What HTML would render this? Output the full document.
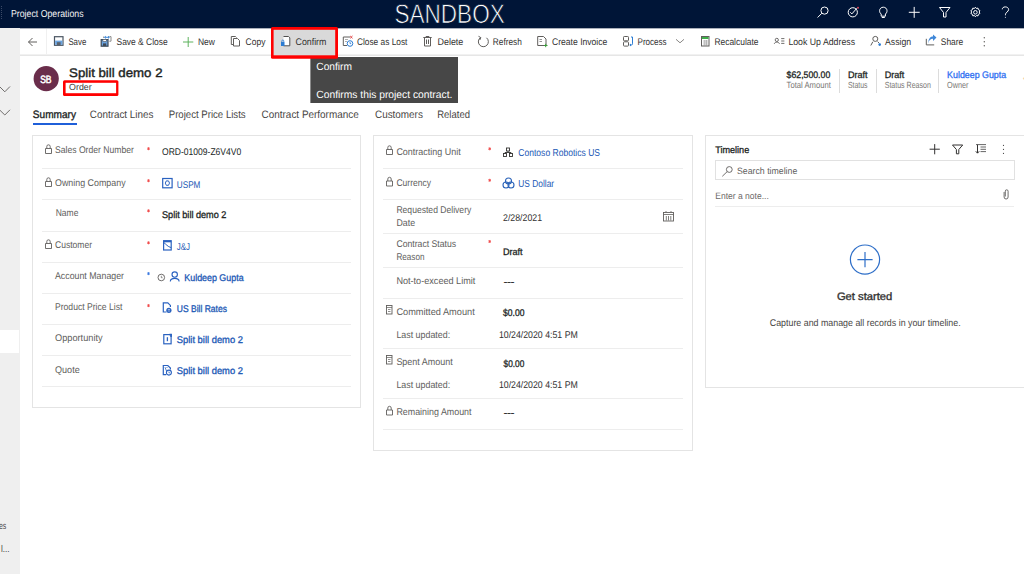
<!DOCTYPE html>
<html><head><meta charset="utf-8"><style>
html,body{margin:0;padding:0;width:1024px;height:574px;overflow:hidden;background:#fff}
svg{display:block;font-family:"Liberation Sans",sans-serif;text-rendering:geometricPrecision}
</style></head><body>
<svg width="1024" height="574" viewBox="0 0 1024 574">
<g shape-rendering="crispEdges">
<rect x="0" y="0" width="1024" height="28" fill="#001537"/>
<rect x="0" y="28" width="1024" height="1" fill="#aab0bb"/>
<rect x="0" y="28" width="20" height="546" fill="#efefef"/>
<rect x="0" y="330" width="19" height="23" fill="#ffffff"/>
<rect x="20" y="54" width="1004" height="1" fill="#f1f1f1"/>
<rect x="20" y="55" width="1004" height="1" fill="#e6e6e6"/>
<rect x="46" y="29" width="1" height="25" fill="#f0f0f0"/>
<!-- tooltip -->
<rect x="310" y="57" width="148" height="46" fill="#474747"/>
<rect x="310" y="57" width="1" height="46" fill="#8c8c8c"/>
<!-- confirm highlight -->
<rect x="271" y="27" width="67" height="31.8" rx="1.5" fill="#ff0000" shape-rendering="geometricPrecision"/>
<rect x="273.6" y="29.8" width="61.6" height="25.5" fill="#d9d9d9" shape-rendering="geometricPrecision"/>
<!-- order box -->
<rect x="63" y="80.3" width="55.4" height="15.6" rx="1.5" fill="#ff0000" shape-rendering="geometricPrecision"/>
<rect x="65.6" y="82.8" width="50.5" height="10.4" fill="#ffffff" shape-rendering="geometricPrecision"/>
<!-- tab underline -->
<rect x="33" y="123" width="44" height="2" fill="#1f5fd9"/>
<!-- header separators -->
<rect x="839" y="69" width="1" height="24" fill="#dcdcdc"/>
<rect x="876" y="69" width="1" height="24" fill="#dcdcdc"/>
<rect x="938" y="69" width="1" height="24" fill="#dcdcdc"/>
<!-- cards -->
<rect x="32.5" y="135.5" width="328" height="272" fill="#ffffff" stroke="#e4e4e4" stroke-width="1"/>
<rect x="373.5" y="135.5" width="319" height="315" fill="#ffffff" stroke="#e4e4e4" stroke-width="1"/>
<rect x="705.5" y="135.5" width="330" height="252" fill="#ffffff" stroke="#e4e4e4" stroke-width="1"/>
</g>
<g fill="#ededed" shape-rendering="crispEdges">
<rect x="42" y="168" width="309" height="1"/>
<rect x="42" y="199" width="309" height="1"/>
<rect x="42" y="231" width="309" height="1"/>
<rect x="42" y="262" width="309" height="1"/>
<rect x="42" y="293" width="309" height="1"/>
<rect x="42" y="324" width="309" height="1"/>
<rect x="42" y="355" width="309" height="1"/>
<rect x="42" y="386" width="309" height="1"/>
<rect x="383" y="168" width="300" height="1"/>
<rect x="383" y="199" width="300" height="1"/>
<rect x="383" y="233" width="300" height="1"/>
<rect x="383" y="267" width="300" height="1"/>
<rect x="383" y="298" width="300" height="1"/>
<rect x="383" y="348" width="300" height="1"/>
<rect x="383" y="398" width="300" height="1"/>
<rect x="383" y="429" width="300" height="1"/>
<rect x="715" y="206" width="299" height="1"/>
</g>
<rect x="715.5" y="160.5" width="299" height="19" fill="none" stroke="#e1e1e1" stroke-width="1" shape-rendering="crispEdges"/>

<g fill="none" stroke="#ffffff" stroke-width="1">
<!-- search -->
<circle cx="824.5" cy="10.6" r="3.6"/>
<path d="M821.9 13.2 L817.6 17.5"/>
<!-- target -->
<circle cx="852.8" cy="12.3" r="4.6"/>
<path d="M850.3 12.3 L851.9 13.9 L856.8 8.3"/>
<!-- bulb -->
<path d="M881.2 16.2 L881.2 14 C879.6 12.8 879.6 11.5 879.6 10.7 C879.6 8.6 881.3 7.2 883.3 7.2 C885.3 7.2 887 8.6 887 10.7 C887 11.5 887 12.8 885.4 14 L885.4 16.2 Z M881.8 17.5 L884.8 17.5"/>
<!-- plus -->
<path d="M908.8 12.3 H919.7 M914.2 6.9 V17.8"/>
<!-- filter -->
<path d="M939.5 7.5 H950 L946 12.5 V17 H943.5 V12.5 Z"/>
<!-- gear -->
<circle cx="975.4" cy="12.3" r="1.8"/>
<path d="M975.4 7.2 l1 1.3 l1.6 -0.4 l0.4 1.6 l1.5 0.8 l-0.7 1.5 l0.7 1.5 l-1.5 0.8 l-0.4 1.6 l-1.6 -0.4 l-1 1.3 l-1 -1.3 l-1.6 0.4 l-0.4 -1.6 l-1.5 -0.8 l0.7 -1.5 l-0.7 -1.5 l1.5 -0.8 l0.4 -1.6 l1.6 0.4 Z"/>
<!-- help -->
<path d="M1002.3 9.3 C1002.3 7.8 1003.5 6.9 1005.3 6.9 C1007.2 6.9 1008.6 8 1008.6 9.6 C1008.6 11.8 1005.4 12.3 1005.4 14.8 V15.3"/>
<circle cx="1005.4" cy="17.3" r="0.5" fill="#fff" stroke="none"/>
</g>
<circle cx="858" cy="7.8" r="1" fill="#e0455a"/>
<!-- waffle remnant -->
<path d="M1.5 6 V19" stroke="#3b4a66" stroke-width="1" stroke-dasharray="1 1"/>

<!-- command bar icons -->
<g fill="none" stroke="#605e5c" stroke-width="1">
<path d="M28.5 42 H37 M32.5 38 L28.5 42 L32.5 46"/>
</g>
<!-- save -->
<rect x="54.5" y="36.7" width="8.5" height="8.6" fill="#ffffff" stroke="#4a5562" stroke-width="1.2"/>
<rect x="55.1" y="40.6" width="7.3" height="4.2" fill="#6aa3df"/>
<rect x="56.9" y="42.2" width="3.7" height="3" fill="#5a626c"/>
<!-- save & close -->
<rect x="101.2" y="39.6" width="6.8" height="6.6" fill="#6aa3df" stroke="#3f4a57" stroke-width="1.2"/>
<rect x="102.9" y="39.4" width="3.4" height="2.2" fill="#fff" stroke="#3f4a57" stroke-width="0.6"/>
<rect x="103" y="43.4" width="3.2" height="2.6" fill="#3f4a57"/>
<path d="M103.5 36.6 V37.8 M109.5 36.6 H111 V41.2 H109.3" fill="none" stroke="#8a8a8a" stroke-width="1"/>
<path d="M104.6 37.3 H109.2 M108 36.2 L109.3 37.3 L108 38.4 M105.8 36.2 L104.5 37.3 L105.8 38.4" fill="none" stroke="#2b7cd3" stroke-width="0.9"/>
<!-- new -->
<path d="M183 42 H193.3 M188.2 37 V47" stroke="#5fb35f" stroke-width="1"/>
<!-- copy -->
<path d="M231.3 36.5 H235.5 L236.5 37.5 M231.3 36.5 V44.5 H233" fill="none" stroke="#605e5c" stroke-width="1"/>
<path d="M233.5 38.5 H237.5 L239.5 40.5 V46 H233.5 Z" fill="#fff" stroke="#605e5c" stroke-width="1"/>
<!-- confirm -->
<path d="M283.5 36.5 H288.5 L289.8 37.8 V45.8 H283.5 V43" fill="#fff" stroke="#4f4f4f" stroke-width="1"/>
<rect x="281" y="42" width="3.5" height="4" fill="#2b7cd3"/>
<path d="M281.8 42 V41 A1 1 0 0 1 283.8 41 V42" fill="none" stroke="#2b7cd3" stroke-width="0.8"/>
<!-- close as lost -->
<path d="M343.3 37 H350 M343.3 37 V45.5 H347" fill="none" stroke="#605e5c" stroke-width="1"/>
<path d="M345 39.5 H348 M345 41.5 H347" stroke="#999" stroke-width="0.8"/>
<path d="M350.2 36 L352.5 38.3 M352.5 36 L350.2 38.3" stroke="#e04040" stroke-width="1"/>
<circle cx="350" cy="43.5" r="2.8" fill="#fff" stroke="#2b7cd3" stroke-width="1"/>
<path d="M350 42 V43.6 H351.2" fill="none" stroke="#2b7cd3" stroke-width="0.8"/>
<!-- delete -->
<path d="M423.3 37.5 H431.7 M426 37.5 V36.5 H429 V37.5 M424.5 37.5 V46 H430.5 V37.5 M426.5 39.5 V44 M428.5 39.5 V44" fill="none" stroke="#605e5c" stroke-width="1"/>
<!-- refresh -->
<path d="M480.5 37.6 A5 5 0 1 0 486.5 37.8" fill="none" stroke="#605e5c" stroke-width="1"/>
<path d="M478.5 36.3 L480.8 37.6 L479.8 40" fill="none" stroke="#605e5c" stroke-width="1"/>
<!-- create invoice -->
<path d="M537.7 36.5 H543.5 L546 39 V45.5 H537.7 Z" fill="#fff" stroke="#605e5c" stroke-width="1"/>
<path d="M539.5 39.5 H542 M539.5 41.5 H542" stroke="#777" stroke-width="0.8"/>
<path d="M544 45.5 H547.5 M545.7 43.8 V47.2" stroke="#3a9a3a" stroke-width="1"/>
<!-- process -->
<rect x="623.5" y="36.5" width="5" height="4.3" rx="0.8" fill="none" stroke="#605e5c" stroke-width="1"/>
<rect x="623.5" y="41.8" width="5" height="4.3" rx="0.8" fill="none" stroke="#605e5c" stroke-width="1"/>
<path d="M632.5 37 V43.8 Q632.5 45 631.3 45 H630 M631 44 L629.8 45 L631 46" fill="none" stroke="#2b7cd3" stroke-width="1"/>
<path d="M631 37 H632.5" stroke="#2b7cd3" stroke-width="1"/>
<path d="M676 39.3 L680 42.8 L684 39.3" fill="none" stroke="#8a8886" stroke-width="1"/>
<!-- recalculate -->
<rect x="701.5" y="36.5" width="7.5" height="9.5" fill="#fff" stroke="#605e5c" stroke-width="1"/>
<rect x="702" y="37" width="6.5" height="2" fill="#3fae49"/>
<path d="M703 41 H708 M703 43 H708 M703 45 H708 M704.8 40 V46 M706.5 40 V46" stroke="#999" stroke-width="0.6"/>
<!-- look up address -->
<circle cx="776.8" cy="39.9" r="1.6" fill="none" stroke="#605e5c" stroke-width="0.9"/>
<path d="M774.3 43.8 C774.5 41.6 779.2 41.6 779.4 43.8" fill="none" stroke="#605e5c" stroke-width="0.9"/>
<path d="M781.2 38.6 H784.4 M781.2 41 H784.4 M781.2 43.4 H784.4" stroke="#605e5c" stroke-width="0.9"/>
<!-- assign -->
<circle cx="875.3" cy="38.9" r="2.5" fill="none" stroke="#605e5c" stroke-width="1"/>
<path d="M870.8 45.5 L872.8 41.8 M877.6 41.6 L879.3 43.3" fill="none" stroke="#605e5c" stroke-width="1"/>
<circle cx="879.7" cy="44.6" r="1.3" fill="#2b7cd3"/>
<!-- share -->
<path d="M926.3 38.8 V44.9 H934.2" fill="none" stroke="#605e5c" stroke-width="1"/>
<path d="M928.3 43.6 C928.6 40.2 930.6 38.8 933 38.8 V40.9 L936.5 37.6 L933 34.6 V36.6 C930 36.6 928.2 39.3 928.3 43.6 Z" fill="#3f87d8"/>
<!-- more -->
<circle cx="984.3" cy="37.8" r="0.7" fill="#605e5c"/>
<circle cx="984.3" cy="41.8" r="0.7" fill="#605e5c"/>
<circle cx="984.3" cy="45.8" r="0.7" fill="#605e5c"/>

<!-- avatar -->
<circle cx="46.2" cy="78.7" r="12.6" fill="#6a2d4b"/>
<!-- orange dot -->
<circle cx="1023.8" cy="78.5" r="1" fill="#f7d9a6"/>

<!-- sidebar chevrons -->
<path d="M-1 86 L4.8 91.8 L10 86.5" fill="none" stroke="#605e5c" stroke-width="0.9"/>
<path d="M-1 109.3 L4.8 115 L10 109.8" fill="none" stroke="#605e5c" stroke-width="0.9"/>

<!-- field icons -->
<g fill="none" stroke="#605e5c" stroke-width="0.9">
<!-- locks -->
<path d="M45.5 153.5 H51.5 V148.5 H45.5 Z M46.8 148.5 V146.5 A1.7 1.7 0 0 1 50.2 146.5 V148.5"/>
<path d="M45.5 186.5 H51.5 V181.5 H45.5 Z M46.8 181.5 V179.5 A1.7 1.7 0 0 1 50.2 179.5 V181.5"/>
<path d="M45.5 248.5 H51.5 V243.5 H45.5 Z M46.8 243.5 V241.5 A1.7 1.7 0 0 1 50.2 241.5 V243.5"/>
<path d="M386.5 154.5 H392.5 V149.5 H386.5 Z M387.8 149.5 V147.5 A1.7 1.7 0 0 1 391.2 147.5 V149.5"/>
<path d="M386.5 186 H392.5 V181 H386.5 Z M387.8 181 V179 A1.7 1.7 0 0 1 391.2 179 V181"/>
<path d="M386.5 415 H392.5 V410 H386.5 Z M387.8 410 V408 A1.7 1.7 0 0 1 391.2 408 V410"/>
<!-- calculator icons -->
<rect x="386.5" y="305.5" width="5.5" height="8.5"/>
<path d="M386.5 307.5 H392 M388 309.5 H390.5 M388 311.5 H390.5" stroke-width="0.7"/>
<rect x="386.5" y="355.5" width="5.5" height="8.5"/>
<path d="M386.5 357.5 H392 M388 359.5 H390.5 M388 361.5 H390.5" stroke-width="0.7"/>
<!-- clock -->
<circle cx="161.3" cy="277.5" r="3.3"/>
<path d="M161.3 275.8 V277.7 H162.6" stroke-width="0.7"/>
<!-- calendar -->
<rect x="663.5" y="212.5" width="10" height="8.5"/>
<path d="M663.5 214.5 H673.5 M666 212 V211 M671 212 V211 M666.3 216 V220.5 M668.5 216 V220.5 M670.8 216 V220.5" stroke-width="0.8"/>
</g>
<!-- asterisks -->
<path d="M148.5 147.2 V150.2 M147.2 147.95 L149.8 149.45 M147.2 149.45 L149.8 147.95" stroke="#f04848" stroke-width="0.9" fill="none"/>
<path d="M148.5 179.2 V182.2 M147.2 179.95 L149.8 181.45 M147.2 181.45 L149.8 179.95" stroke="#f04848" stroke-width="0.9" fill="none"/>
<path d="M148.5 209.3 V212.3 M147.2 210.05 L149.8 211.55 M147.2 211.55 L149.8 210.05" stroke="#f04848" stroke-width="0.9" fill="none"/>
<path d="M148.5 241.3 V244.3 M147.2 242.05 L149.8 243.55 M147.2 243.55 L149.8 242.05" stroke="#f04848" stroke-width="0.9" fill="none"/>
<path d="M148.5 304.1 V307.1 M147.2 304.85 L149.8 306.35 M147.2 306.35 L149.8 304.85" stroke="#f04848" stroke-width="0.9" fill="none"/>
<path d="M489.7 147.3 V150.3 M488.4 148.05 L491.0 149.55 M488.4 149.55 L491.0 148.05" stroke="#f04848" stroke-width="0.9" fill="none"/>
<path d="M489.7 178.8 V181.8 M488.4 179.55 L491.0 181.05 M488.4 181.05 L491.0 179.55" stroke="#f04848" stroke-width="0.9" fill="none"/>
<path d="M489.7 240.0 V243.0 M488.4 240.75 L491.0 242.25 M488.4 242.25 L491.0 240.75" stroke="#f04848" stroke-width="0.9" fill="none"/>
<path d="M148.5 272.1 V275.1 M147.2 272.85 L149.8 274.35 M147.2 274.35 L149.8 272.85" stroke="#3a78e0" stroke-width="0.9" fill="none"/>
<!-- lookup icons -->
<g fill="none" stroke="#2a62c0" stroke-width="1.2">
<!-- uspm -->
<rect x="162.7" y="178.5" width="9.4" height="9.3"/>
<path d="M165.3 183.1 L166.3 180.9 H168.5 L169.5 183.1 L168.5 185.3 H166.3 Z" stroke-width="1"/>
<!-- J&J account -->
<rect x="163.6" y="240.7" width="7.6" height="9.3"/>
<rect x="163.6" y="240.7" width="7.6" height="1.6" fill="#2a62c0" stroke="none"/>
<path d="M163.8 242.6 C166 244 167.5 246.8 171.2 247.6" stroke-width="1"/>
<!-- person -->
<circle cx="174.7" cy="274.6" r="2.7" stroke-width="1.1"/>
<path d="M170.3 281.5 C170.3 277.3 179.1 277.3 179.1 281.5" stroke-width="1.1"/>
<!-- price list -->
<path d="M166.5 312 H163.3 V302.8 H167.8 L170.4 305.4 V307"/>
<circle cx="168.9" cy="310.3" r="2.6" fill="#2a62c0" stroke="none"/>
<path d="M167.8 309.5 H170 M167.8 311 H170" stroke="#fff" stroke-width="0.5"/>
<!-- opportunity -->
<rect x="163.8" y="334.6" width="7.3" height="9.2"/>
<path d="M167.4 337.2 V341.2" stroke-width="1.3"/>
<path d="M169.5 334.6 H171.1 V337" stroke-width="1.6"/>
<!-- quote -->
<path d="M166.2 374.6 H163.3 V365.5 H167.8 L170.4 368.1 V369.5"/>
<path d="M165 367.2 L166.5 371 M166.5 367.5 H167.5" stroke-width="0.8"/>
<circle cx="168.9" cy="372.6" r="2.5" fill="#fff" stroke-width="1.1"/>
<path d="M168.9 371.5 V372.8 H170" stroke-width="0.7"/>
</g>
<!-- contracting unit (org chart) -->
<g fill="none" stroke="#323130" stroke-width="0.9">
<rect x="506.5" y="148" width="3" height="3"/>
<rect x="503.5" y="153.5" width="3" height="3"/>
<rect x="509.5" y="153.5" width="3" height="3"/>
<path d="M508 151 V152.5 M505 153.5 V152.5 H511 V153.5"/>
</g>
<!-- currency -->
<g fill="none" stroke="#2a62b8" stroke-width="1.1">
<circle cx="508.5" cy="181" r="3"/>
<circle cx="506" cy="185" r="3"/>
<circle cx="511" cy="185" r="3"/>
</g>
<!-- timeline header icons -->
<g fill="none" stroke="#323130" stroke-width="1">
<path d="M929.6 149.2 H939.8 M934.7 144.1 V154.3"/>
<path d="M952.5 145 H962.7 L958.8 149.5 V153.8 H956.4 V149.5 Z"/>
<path d="M977.5 144.5 V153 M975.8 151.3 L977.5 153.2 L979.2 151.3" stroke="#323130"/>
<path d="M976 144.6 H986 M980.5 147 H986 M980.5 149.3 H986 M980.5 151.6 H986" stroke="#555" stroke-width="0.9"/>
</g>
<circle cx="1003.5" cy="145.3" r="0.6" fill="#323130"/>
<circle cx="1003.5" cy="149.3" r="0.6" fill="#323130"/>
<circle cx="1003.5" cy="153.3" r="0.6" fill="#323130"/>
<!-- search timeline icon -->
<g fill="none" stroke="#605e5c" stroke-width="0.9">
<circle cx="729.3" cy="169.5" r="2.9"/>
<path d="M727.2 171.6 L722.3 176.3"/>
</g>
<!-- paperclip -->
<path d="M1005.3 196.5 V191.2 A1.4 1.4 0 0 1 1008.1 191.2 V197 A2 2 0 0 1 1004.1 197 V192" fill="none" stroke="#605e5c" stroke-width="0.9"/>
<!-- get started circle -->
<circle cx="865" cy="259.6" r="14.6" fill="none" stroke="#2f6fc8" stroke-width="1.2"/>
<path d="M857.4 259.6 H872.6 M865 252 V267.2" fill="none" stroke="#2f6fc8" stroke-width="1.2"/>

<g>
<text x="11.00" y="17.40" font-size="10.06" fill="#f4f4f4" textLength="72.52" lengthAdjust="spacingAndGlyphs">Project Operations</text>
<text x="394.56" y="22.90" font-size="26.82" fill="#ffffff" stroke="#001537" stroke-width="0.7" textLength="110.13" lengthAdjust="spacingAndGlyphs">SANDBOX</text>
<text x="68.40" y="44.90" font-size="9.64" fill="#323130" textLength="17.89" lengthAdjust="spacingAndGlyphs">Save</text>
<text x="116.50" y="44.90" font-size="9.64" fill="#323130" textLength="51.11" lengthAdjust="spacingAndGlyphs">Save &amp; Close</text>
<text x="198.00" y="44.90" font-size="9.64" fill="#323130" textLength="16.96" lengthAdjust="spacingAndGlyphs">New</text>
<text x="245.60" y="44.90" font-size="9.64" fill="#323130" textLength="19.83" lengthAdjust="spacingAndGlyphs">Copy</text>
<text x="295.50" y="44.90" font-size="9.64" fill="#323130" textLength="30.92" lengthAdjust="spacingAndGlyphs">Confirm</text>
<text x="356.90" y="44.90" font-size="9.64" fill="#323130" textLength="50.52" lengthAdjust="spacingAndGlyphs">Close as Lost</text>
<text x="437.50" y="44.90" font-size="9.64" fill="#323130" textLength="25.83" lengthAdjust="spacingAndGlyphs">Delete</text>
<text x="492.80" y="44.90" font-size="9.64" fill="#323130" textLength="29.00" lengthAdjust="spacingAndGlyphs">Refresh</text>
<text x="552.00" y="44.90" font-size="9.64" fill="#323130" textLength="55.31" lengthAdjust="spacingAndGlyphs">Create Invoice</text>
<text x="637.50" y="44.90" font-size="9.64" fill="#323130" textLength="29.14" lengthAdjust="spacingAndGlyphs">Process</text>
<text x="714.40" y="44.90" font-size="9.64" fill="#323130" textLength="44.11" lengthAdjust="spacingAndGlyphs">Recalculate</text>
<text x="788.40" y="44.90" font-size="9.64" fill="#323130" textLength="66.63" lengthAdjust="spacingAndGlyphs">Look Up Address</text>
<text x="885.00" y="44.90" font-size="9.64" fill="#323130" textLength="26.12" lengthAdjust="spacingAndGlyphs">Assign</text>
<text x="940.80" y="44.90" font-size="9.64" fill="#323130" textLength="22.51" lengthAdjust="spacingAndGlyphs">Share</text>
<text x="316.30" y="70.40" font-size="10.47" fill="#ffffff" textLength="35.73" lengthAdjust="spacingAndGlyphs">Confirm</text>
<text x="316.30" y="97.80" font-size="10.47" fill="#ffffff" textLength="136.09" lengthAdjust="spacingAndGlyphs">Confirms this project contract.</text>
<text x="40.20" y="82.90" font-size="10.61" fill="#ffffff" stroke="#ffffff" stroke-width="0.55" textLength="11.36" lengthAdjust="spacingAndGlyphs">SB</text>
<text x="69.10" y="77.30" font-size="12.43" fill="#201f1e" stroke="#201f1e" stroke-width="0.40" textLength="93.40" lengthAdjust="spacingAndGlyphs">Split bill demo 2</text>
<text x="69.10" y="90.20" font-size="8.94" fill="#3b3a39" textLength="22.57" lengthAdjust="spacingAndGlyphs">Order</text>
<text x="32.80" y="117.90" font-size="10.75" fill="#201f1e" stroke="#201f1e" stroke-width="0.34" textLength="43.21" lengthAdjust="spacingAndGlyphs">Summary</text>
<text x="89.80" y="117.90" font-size="10.75" fill="#484644" textLength="63.64" lengthAdjust="spacingAndGlyphs">Contract Lines</text>
<text x="168.75" y="117.90" font-size="10.75" fill="#484644" textLength="76.89" lengthAdjust="spacingAndGlyphs">Project Price Lists</text>
<text x="261.60" y="117.90" font-size="10.75" fill="#484644" textLength="97.13" lengthAdjust="spacingAndGlyphs">Contract Performance</text>
<text x="375.00" y="117.90" font-size="10.75" fill="#484644" textLength="47.85" lengthAdjust="spacingAndGlyphs">Customers</text>
<text x="437.20" y="117.90" font-size="10.75" fill="#484644" textLength="32.78" lengthAdjust="spacingAndGlyphs">Related</text>
<text x="786.60" y="77.70" font-size="9.50" fill="#201f1e" stroke="#201f1e" stroke-width="0.30" textLength="43.65" lengthAdjust="spacingAndGlyphs">$62,500.00</text>
<text x="786.60" y="88.10" font-size="8.94" fill="#797775" textLength="44.26" lengthAdjust="spacingAndGlyphs">Total Amount</text>
<text x="847.90" y="77.70" font-size="9.50" fill="#201f1e" stroke="#201f1e" stroke-width="0.30" textLength="19.65" lengthAdjust="spacingAndGlyphs">Draft</text>
<text x="847.90" y="88.10" font-size="8.94" fill="#797775" textLength="19.58" lengthAdjust="spacingAndGlyphs">Status</text>
<text x="884.70" y="77.70" font-size="9.50" fill="#201f1e" stroke="#201f1e" stroke-width="0.30" textLength="19.55" lengthAdjust="spacingAndGlyphs">Draft</text>
<text x="884.70" y="88.10" font-size="8.94" fill="#797775" textLength="46.17" lengthAdjust="spacingAndGlyphs">Status Reason</text>
<text x="947.10" y="77.60" font-size="9.50" fill="#2e6ef2" stroke="#2e6ef2" stroke-width="0.30" textLength="59.02" lengthAdjust="spacingAndGlyphs">Kuldeep Gupta</text>
<text x="947.10" y="88.10" font-size="8.94" fill="#797775" textLength="21.38" lengthAdjust="spacingAndGlyphs">Owner</text>
<text x="55.00" y="153.30" font-size="9.78" fill="#605e5c" textLength="78.94" lengthAdjust="spacingAndGlyphs">Sales Order Number</text>
<text x="55.00" y="185.80" font-size="9.78" fill="#605e5c" textLength="70.59" lengthAdjust="spacingAndGlyphs">Owning Company</text>
<text x="55.70" y="215.50" font-size="9.78" fill="#605e5c" textLength="22.68" lengthAdjust="spacingAndGlyphs">Name</text>
<text x="55.00" y="247.90" font-size="9.78" fill="#605e5c" textLength="37.05" lengthAdjust="spacingAndGlyphs">Customer</text>
<text x="55.00" y="278.90" font-size="9.78" fill="#605e5c" textLength="69.03" lengthAdjust="spacingAndGlyphs">Account Manager</text>
<text x="55.00" y="310.40" font-size="9.78" fill="#605e5c" textLength="67.35" lengthAdjust="spacingAndGlyphs">Product Price List</text>
<text x="55.00" y="341.30" font-size="9.78" fill="#605e5c" textLength="47.59" lengthAdjust="spacingAndGlyphs">Opportunity</text>
<text x="55.00" y="372.60" font-size="9.78" fill="#605e5c" textLength="24.70" lengthAdjust="spacingAndGlyphs">Quote</text>
<text x="162.00" y="155.40" font-size="9.78" fill="#201f1e" textLength="79.25" lengthAdjust="spacingAndGlyphs">ORD-01009-Z6V4V0</text>
<text x="176.80" y="187.60" font-size="9.78" fill="#1b58b5" textLength="23.61" lengthAdjust="spacingAndGlyphs">USPM</text>
<text x="162.00" y="217.80" font-size="9.78" fill="#201f1e" stroke="#201f1e" stroke-width="0.31" textLength="64.40" lengthAdjust="spacingAndGlyphs">Split bill demo 2</text>
<text x="176.80" y="249.80" font-size="9.78" fill="#1b58b5" textLength="13.30" lengthAdjust="spacingAndGlyphs">J&amp;J</text>
<text x="184.30" y="280.90" font-size="9.78" fill="#1b58b5" stroke="#1b58b5" stroke-width="0.31" textLength="59.28" lengthAdjust="spacingAndGlyphs">Kuldeep Gupta</text>
<text x="176.80" y="312.00" font-size="9.78" fill="#1b58b5" stroke="#1b58b5" stroke-width="0.31" textLength="50.10" lengthAdjust="spacingAndGlyphs">US Bill Rates</text>
<text x="176.80" y="343.10" font-size="9.78" fill="#1b58b5" stroke="#1b58b5" stroke-width="0.31" textLength="66.11" lengthAdjust="spacingAndGlyphs">Split bill demo 2</text>
<text x="176.80" y="374.30" font-size="9.78" fill="#1b58b5" stroke="#1b58b5" stroke-width="0.31" textLength="66.11" lengthAdjust="spacingAndGlyphs">Split bill demo 2</text>
<text x="396.40" y="154.90" font-size="9.78" fill="#605e5c" textLength="64.24" lengthAdjust="spacingAndGlyphs">Contracting Unit</text>
<text x="396.40" y="186.10" font-size="9.78" fill="#605e5c" textLength="34.60" lengthAdjust="spacingAndGlyphs">Currency</text>
<text x="396.40" y="212.80" font-size="9.78" fill="#605e5c" textLength="74.90" lengthAdjust="spacingAndGlyphs">Requested Delivery</text>
<text x="396.40" y="225.70" font-size="9.78" fill="#605e5c" textLength="18.69" lengthAdjust="spacingAndGlyphs">Date</text>
<text x="396.40" y="246.90" font-size="9.78" fill="#605e5c" textLength="59.70" lengthAdjust="spacingAndGlyphs">Contract Status</text>
<text x="396.40" y="260.00" font-size="9.78" fill="#605e5c" textLength="28.06" lengthAdjust="spacingAndGlyphs">Reason</text>
<text x="396.40" y="283.90" font-size="9.78" fill="#605e5c" textLength="78.93" lengthAdjust="spacingAndGlyphs">Not-to-exceed Limit</text>
<text x="396.40" y="314.80" font-size="9.78" fill="#605e5c" textLength="78.33" lengthAdjust="spacingAndGlyphs">Committed Amount</text>
<text x="396.40" y="338.40" font-size="9.78" fill="#605e5c" textLength="53.75" lengthAdjust="spacingAndGlyphs">Last updated:</text>
<text x="396.40" y="365.20" font-size="9.78" fill="#605e5c" textLength="56.34" lengthAdjust="spacingAndGlyphs">Spent Amount</text>
<text x="396.40" y="388.20" font-size="9.78" fill="#605e5c" textLength="53.75" lengthAdjust="spacingAndGlyphs">Last updated:</text>
<text x="396.40" y="415.30" font-size="9.78" fill="#605e5c" textLength="75.14" lengthAdjust="spacingAndGlyphs">Remaining Amount</text>
<text x="518.30" y="156.00" font-size="10.06" fill="#1b58b5" textLength="81.75" lengthAdjust="spacingAndGlyphs">Contoso Robotics US</text>
<text x="518.30" y="187.30" font-size="10.20" fill="#1b58b5" textLength="35.80" lengthAdjust="spacingAndGlyphs">US Dollar</text>
<text x="503.00" y="220.50" font-size="9.78" fill="#323130" textLength="39.09" lengthAdjust="spacingAndGlyphs">2/28/2021</text>
<text x="503.00" y="254.60" font-size="9.50" fill="#201f1e" stroke="#201f1e" stroke-width="0.30" textLength="19.65" lengthAdjust="spacingAndGlyphs">Draft</text>
<text x="503.00" y="316.20" font-size="9.78" fill="#201f1e" stroke="#201f1e" stroke-width="0.31" textLength="21.40" lengthAdjust="spacingAndGlyphs">$0.00</text>
<text x="498.90" y="338.40" font-size="9.78" fill="#323130" textLength="78.92" lengthAdjust="spacingAndGlyphs">10/24/2020 4:51 PM</text>
<text x="503.60" y="366.60" font-size="9.78" fill="#201f1e" stroke="#201f1e" stroke-width="0.31" textLength="20.72" lengthAdjust="spacingAndGlyphs">$0.00</text>
<text x="503.80" y="285.20" font-size="9.78" fill="#201f1e" stroke="#201f1e" stroke-width="0.31" textLength="10.57" lengthAdjust="spacingAndGlyphs">---</text>
<text x="503.80" y="416.10" font-size="9.78" fill="#201f1e" stroke="#201f1e" stroke-width="0.31" textLength="10.57" lengthAdjust="spacingAndGlyphs">---</text>
<text x="498.90" y="388.20" font-size="9.78" fill="#323130" textLength="78.92" lengthAdjust="spacingAndGlyphs">10/24/2020 4:51 PM</text>
<text x="715.20" y="153.00" font-size="9.50" fill="#201f1e" stroke="#201f1e" stroke-width="0.30" textLength="34.06" lengthAdjust="spacingAndGlyphs">Timeline</text>
<text x="737.00" y="174.00" font-size="9.22" fill="#605e5c" textLength="60.31" lengthAdjust="spacingAndGlyphs">Search timeline</text>
<text x="715.20" y="199.20" font-size="9.22" fill="#6b6967" textLength="53.62" lengthAdjust="spacingAndGlyphs">Enter a note...</text>
<text x="836.90" y="300.20" font-size="10.89" fill="#323130" stroke="#323130" stroke-width="0.35" textLength="55.45" lengthAdjust="spacingAndGlyphs">Get started</text>
<text x="769.80" y="326.30" font-size="9.78" fill="#484644" textLength="190.85" lengthAdjust="spacingAndGlyphs">Capture and manage all records in your timeline.</text>
<text x="-1.00" y="529.20" font-size="9.78" fill="#484644" textLength="7.32" lengthAdjust="spacingAndGlyphs">es</text>
<text x="0.90" y="551.80" font-size="9.78" fill="#484644" textLength="8.59" lengthAdjust="spacingAndGlyphs">l...</text>
</g>
</svg>
</body></html>
